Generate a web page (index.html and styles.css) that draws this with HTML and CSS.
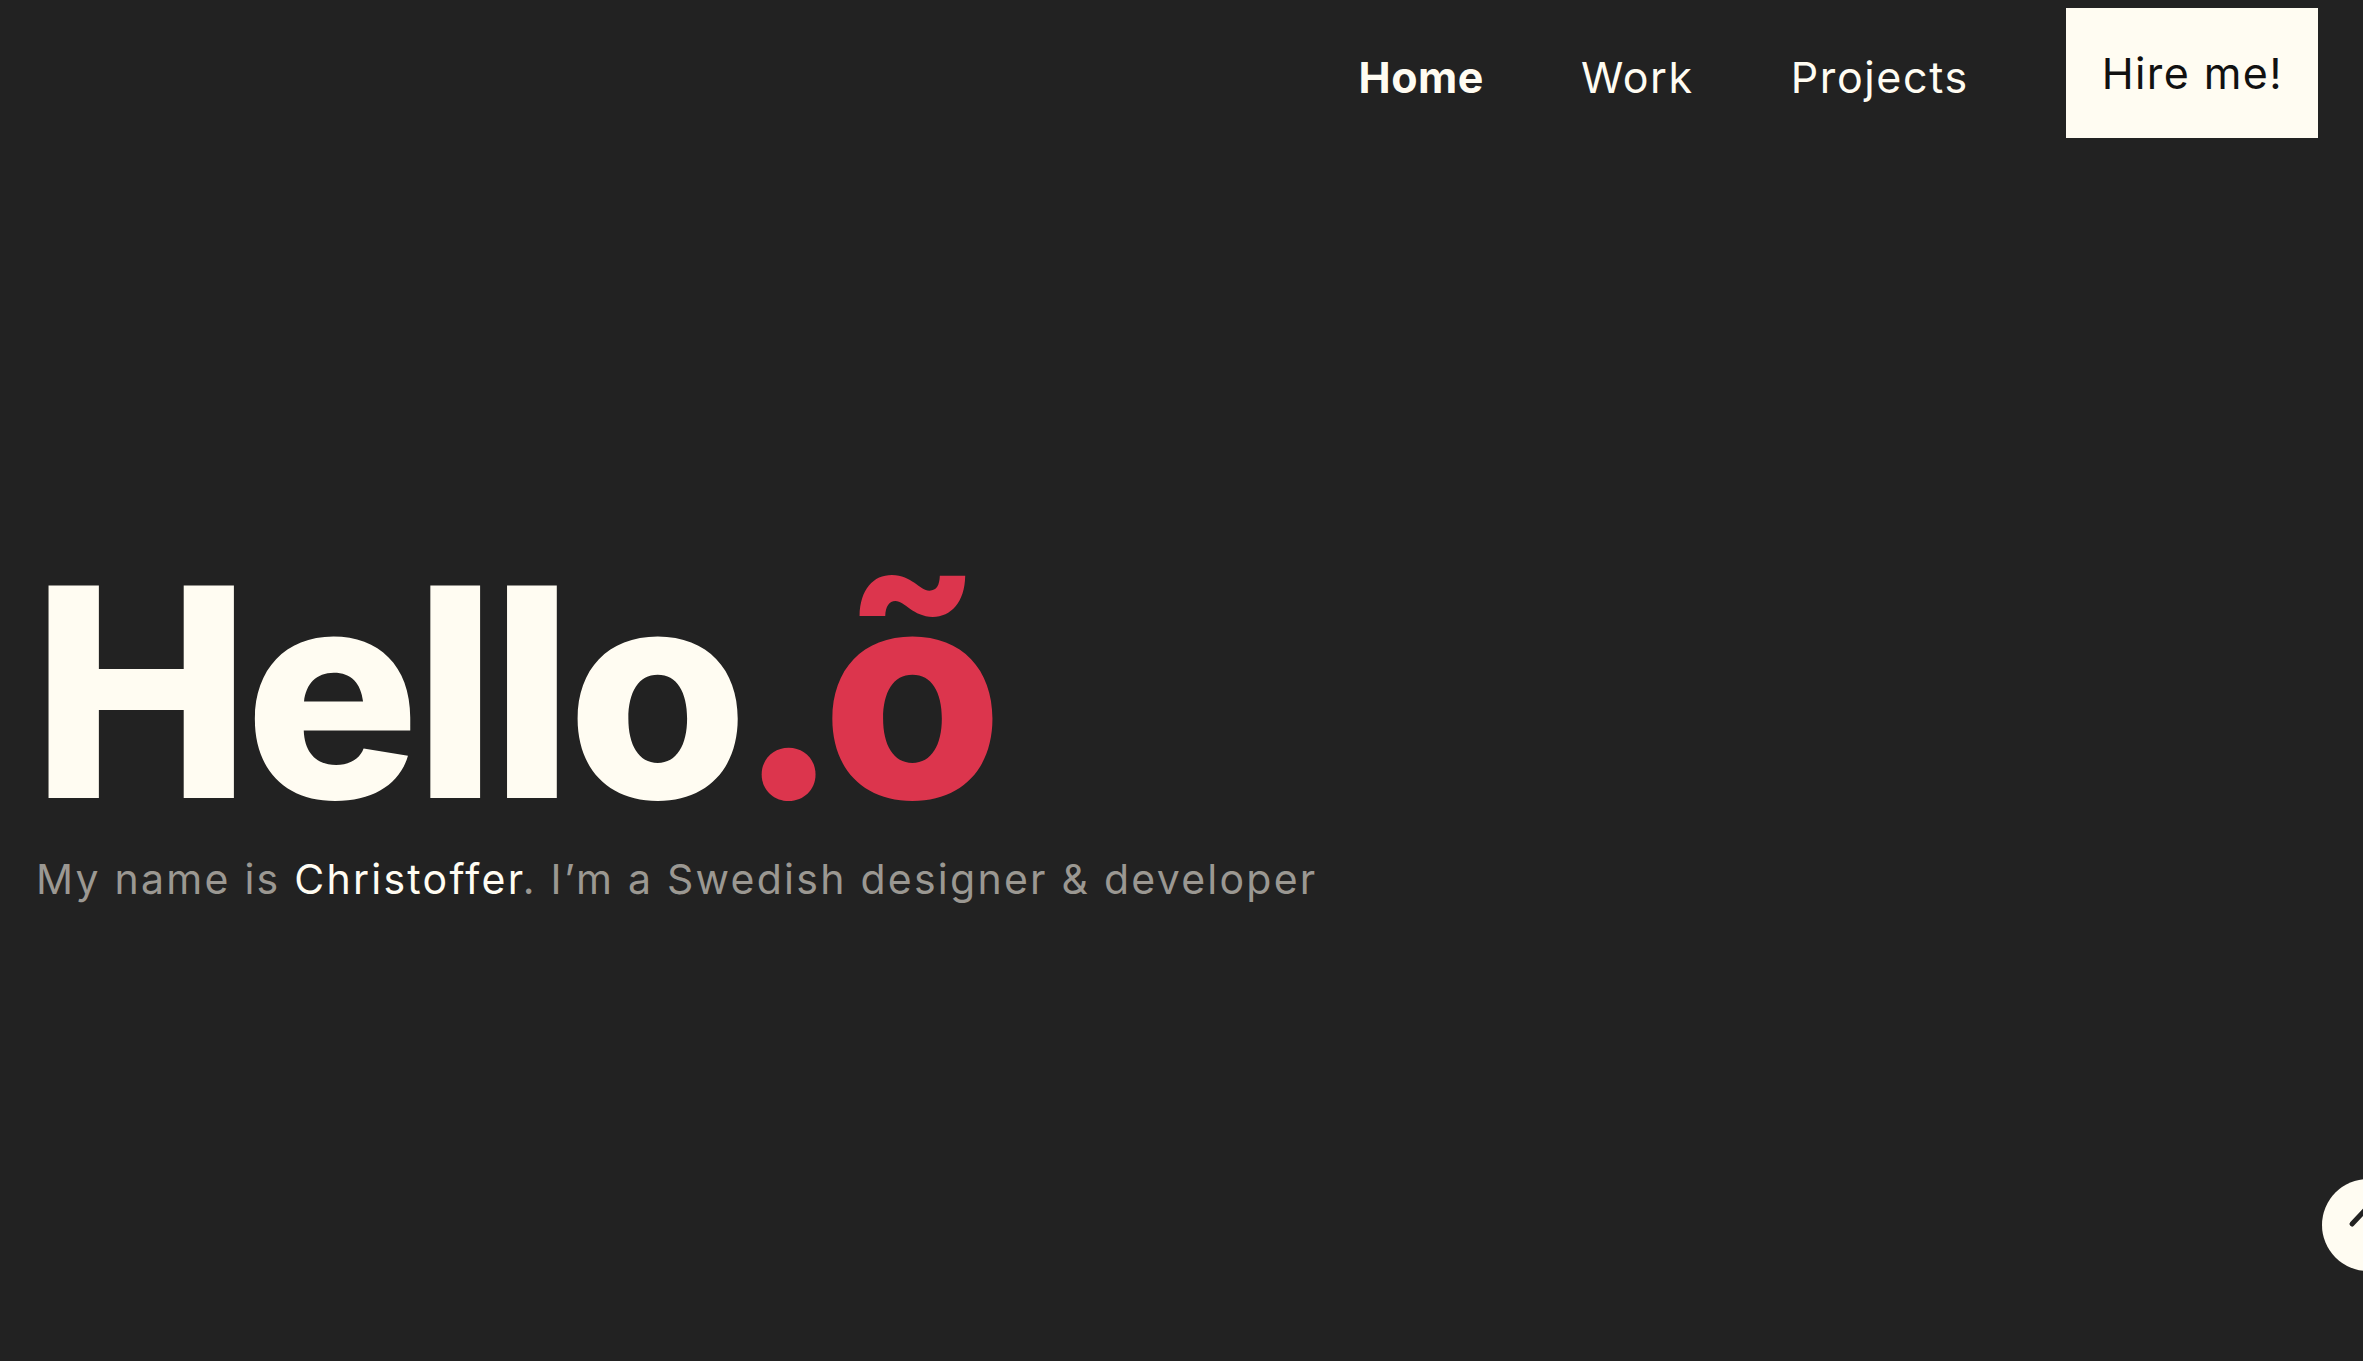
FILE: index.html
```html
<!DOCTYPE html>
<html lang="en">
<head>
<meta charset="utf-8">
<title>Christoffer</title>
<link rel="stylesheet" href="styles.css">
</head>
<body>
<header class="site-header">
  <nav class="nav">
    <a class="nav-link is-active" href="#">Home</a>
    <a class="nav-link" href="#">Work</a>
    <a class="nav-link" href="#">Projects</a>
    <a class="hire-btn" href="#">Hire me!</a>
  </nav>
</header>
<main class="hero">
  <h1 class="hero-title">Hello<span class="accent">.õ</span></h1>
  <p class="hero-sub">My name is <strong class="name">Christoffer</strong>. I’m a Swedish designer &amp; developer</p>
</main>
<a class="to-top" href="#" aria-label="Back to top">
  <svg viewBox="0 0 92 92" width="92" height="92" aria-hidden="true">
    <polyline points="30,45 46,28 62,45" fill="none" stroke="#222222" stroke-width="5" stroke-linecap="round" stroke-linejoin="round"/>
  </svg>
</a>
</body>
</html>
```
FILE: styles.css
```css
html, body {
  margin: 0;
  padding: 0;
}
body {
  background: #222222;
  color: #fffcf2;
  font-family: Inter, "Noto Sans", sans-serif;
  min-height: 1361px;
  overflow: hidden;
}
a { text-decoration: none; color: inherit; }

.site-header {
  display: flex;
  justify-content: flex-end;
  padding: 8px 45px 0 0;
}
.nav {
  display: flex;
  align-items: center;
  gap: 97px;
}
.nav-link {
  font-size: 43px;
  font-weight: 400;
  letter-spacing: 1.6px;
  color: #fffcf2;
  padding-top: 8px;
}
.nav-link.is-active {
  font-weight: 700;
  letter-spacing: 0.5px;
}
.hire-btn {
  display: flex;
  align-items: center;
  height: 130px;
  padding: 0 35px 0 36px;
  background: #fffcf2;
  color: #111111;
  font-size: 43px;
  font-weight: 400;
  letter-spacing: 1.4px;
}

.hero {
  margin-top: 408px;
  padding-left: 32px;
}
.hero-title {
  margin: 0;
  font-size: 292px;
  line-height: 1;
  font-weight: 800;
  letter-spacing: -6px;
  color: #fffcf2;
}
.accent {
  color: #dc354d;
  margin-left: -5px;
  letter-spacing: -18px;
}
.hero-sub {
  margin: 17px 0 0 4px;
  font-size: 41px;
  line-height: 1.2;
  letter-spacing: 2.25px;
  color: #9b9892;
}
.name { font-weight: 400; color: #fffcf2; }

.to-top {
  position: fixed;
  right: -51px;
  top: 1179px;
  width: 92px;
  height: 92px;
  border-radius: 50%;
  background: #fffcf2;
  display: block;
}
.to-top svg { display: block; }
```
